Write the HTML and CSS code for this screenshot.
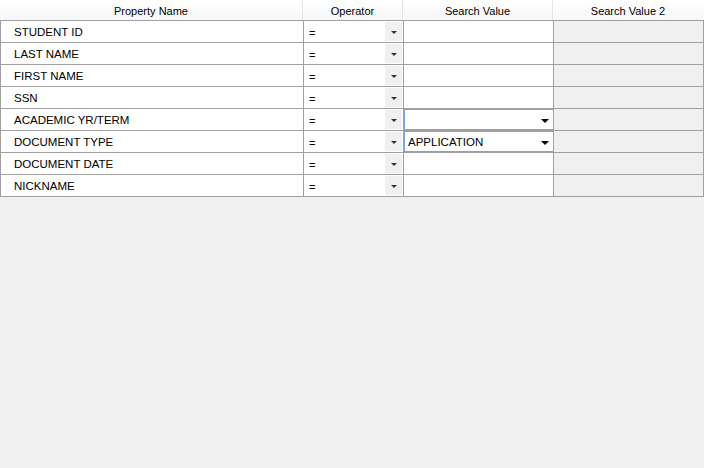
FILE: index.html
```html
<!DOCTYPE html>
<html>
<head>
<meta charset="utf-8">
<link rel="stylesheet" href="styles.css">
</head>
<body>
<div class="grid">
  <div class="hdr">
    <div class="hc c1">Property Name</div>
    <div class="hc c2">Operator</div>
    <div class="hc c3">Search Value</div>
    <div class="hc c4">Search Value 2</div>
  </div>
  <div class="row"><div class="cell c1 name">STUDENT ID</div><div class="cell c2 op"><span>=</span><span class="btn"><i class="tri"></i></span></div><div class="cell c3"></div><div class="cell c4 dis"></div></div>
  <div class="row"><div class="cell c1 name">LAST NAME</div><div class="cell c2 op"><span>=</span><span class="btn"><i class="tri"></i></span></div><div class="cell c3"></div><div class="cell c4 dis"></div></div>
  <div class="row"><div class="cell c1 name">FIRST NAME</div><div class="cell c2 op"><span>=</span><span class="btn"><i class="tri"></i></span></div><div class="cell c3"></div><div class="cell c4 dis"></div></div>
  <div class="row"><div class="cell c1 name">SSN</div><div class="cell c2 op"><span>=</span><span class="btn"><i class="tri"></i></span></div><div class="cell c3"></div><div class="cell c4 dis"></div></div>
  <div class="row"><div class="cell c1 name">ACADEMIC YR/TERM</div><div class="cell c2 op"><span>=</span><span class="btn"><i class="tri"></i></span></div><div class="cell c3 combo"><span class="val"></span><i class="tri big"></i></div><div class="cell c4 dis"></div></div>
  <div class="row"><div class="cell c1 name">DOCUMENT TYPE</div><div class="cell c2 op"><span>=</span><span class="btn"><i class="tri"></i></span></div><div class="cell c3 combo"><span class="val">APPLICATION</span><i class="tri big"></i></div><div class="cell c4 dis"></div></div>
  <div class="row"><div class="cell c1 name">DOCUMENT DATE</div><div class="cell c2 op"><span>=</span><span class="btn"><i class="tri"></i></span></div><div class="cell c3"></div><div class="cell c4 dis"></div></div>
  <div class="row"><div class="cell c1 name">NICKNAME</div><div class="cell c2 op"><span>=</span><span class="btn"><i class="tri"></i></span></div><div class="cell c3"></div><div class="cell c4 dis"></div></div>
</div>
</body>
</html>
```
FILE: styles.css
```css
html, body {
  margin: 0;
  padding: 0;
  background: #f0f0f0;
  width: 704px;
  height: 468px;
  overflow: hidden;
  font-family: "Liberation Sans", Arial, sans-serif;
  font-size: 11px;
  color: #000;
}
.grid {
  width: 704px;
  display: flex;
  flex-direction: column;
}
.hdr {
  display: flex;
  background: linear-gradient(#ffffff, #f6f7f9);
  border-bottom: 1px solid #a0a0a0;
  box-sizing: border-box;
  height: 21px;
}
.hc {
  box-sizing: border-box;
  text-align: center;
  padding-top: 1px;
  line-height: 20px;
  border-right: 1px solid #e4e5e8;
  font-size: 11px;
  color: #000;
}
.c1 { width: 303px; }
.c2 { width: 100px; }
.c3 { width: 150px; }
.c4 { width: 151px; }
.hdr .c4 { border-right: none; width: 150px; }
.row {
  display: flex;
  height: 22px;
  box-sizing: border-box;
  border-bottom: 1px solid #a0a0a0;
  border-left: 1px solid #a0a0a0;
}
.cell {
  box-sizing: border-box;
  height: 21px;
  background: #fff;
  border-right: 1px solid #a0a0a0;
  position: relative;
}
.row .c1 { width: 303px; padding-left: 13px; padding-top: 1px; line-height: 20px; font-size: 11.5px; }
.row .c2 { width: 100px; }
.row .c3 { width: 150px; }
.row .c4 { width: 150px; }
.dis { background: #f0f0f0; }
.op {
  display: flex;
  align-items: center;
  justify-content: space-between;
  padding-left: 5px;
  padding-right: 1px;
}
.op span:first-child { padding-top: 2px; font-size: 11px; }
.btn {
  width: 17px;
  height: 19px;
  background: #f0f0f0;
  display: flex;
  align-items: center;
  justify-content: center;
}
.tri {
  display: block;
  width: 0;
  height: 0;
  border-left: 3px solid transparent;
  border-right: 3px solid transparent;
  border-top: 3px solid #333;
  margin-left: 1px;
  margin-top: 1px;
}
.combo {
  display: flex;
  align-items: center;
  justify-content: space-between;
  border: 1px solid #7aa7d8;
  padding-left: 3px;
  padding-right: 4px;
  padding-top: 1px;
  line-height: 18px;
  font-size: 11.5px;
}
.tri.big {
  border-left-width: 4px;
  border-right-width: 4px;
  border-top-width: 4px;
  border-top-color: #000;
  margin-top: 1px;
}
```
